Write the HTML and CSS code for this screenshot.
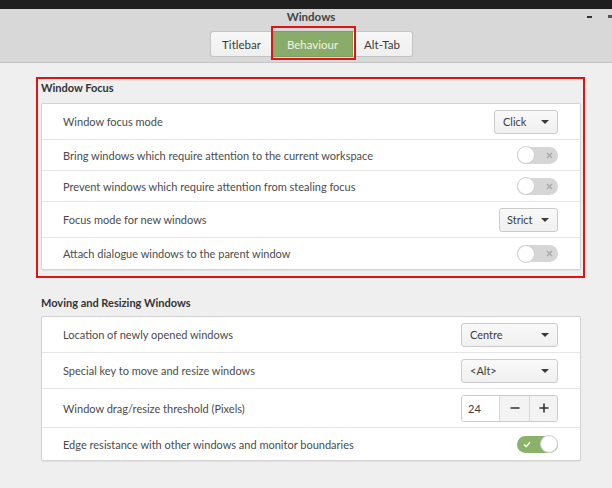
FILE: index.html
```html
<!DOCTYPE html>
<html>
<head>
<meta charset="utf-8">
<title>Windows</title>
<link rel="stylesheet" href="styles.css">
</head>
<body>
<div class="topbar"></div>
<header class="header">
  <div class="title">Windows</div>
  <nav class="tabs">
    <div class="tab first">Titlebar</div>
    <div class="tab active">Behaviour</div>
    <div class="tab last">Alt-Tab</div>
  </nav>
  <div class="wincontrols"><span class="minimize"></span><span class="maximize"></span></div>
</header>
<main class="content">
  <section class="section highlighted">
    <h2 class="heading">Window Focus</h2>
    <div class="card">
      <div class="row tall">
        <span class="label">Window focus mode</span>
        <div class="combo w-click"><span>Click</span><span class="arrow"></span></div>
      </div>
      <div class="row">
        <span class="label">Bring windows which require attention to the current workspace</span>
        <div class="switch off"><span class="knob"></span><svg class="mark" width="7" height="7" viewBox="0 0 7 7"><path d="M1 1L6 6M6 1L1 6" stroke="#a9a9a9" stroke-width="1.4" fill="none"/></svg></div>
      </div>
      <div class="row">
        <span class="label">Prevent windows which require attention from stealing focus</span>
        <div class="switch off"><span class="knob"></span><svg class="mark" width="7" height="7" viewBox="0 0 7 7"><path d="M1 1L6 6M6 1L1 6" stroke="#a9a9a9" stroke-width="1.4" fill="none"/></svg></div>
      </div>
      <div class="row tall">
        <span class="label">Focus mode for new windows</span>
        <div class="combo w-strict"><span>Strict</span><span class="arrow"></span></div>
      </div>
      <div class="row last">
        <span class="label">Attach dialogue windows to the parent window</span>
        <div class="switch off"><span class="knob"></span><svg class="mark" width="7" height="7" viewBox="0 0 7 7"><path d="M1 1L6 6M6 1L1 6" stroke="#a9a9a9" stroke-width="1.4" fill="none"/></svg></div>
      </div>
    </div>
  </section>

  <section class="section plain">
    <h2 class="heading">Moving and Resizing Windows</h2>
    <div class="card">
      <div class="row tall">
        <span class="label">Location of newly opened windows</span>
        <div class="combo w-wide"><span>Centre</span><span class="arrow"></span></div>
      </div>
      <div class="row tall">
        <span class="label">Special key to move and resize windows</span>
        <div class="combo w-wide"><span>&lt;Alt&gt;</span><span class="arrow"></span></div>
      </div>
      <div class="row spinrow">
        <span class="label">Window drag/resize threshold (Pixels)</span>
        <div class="spin">
          <span class="spin-entry">24</span>
          <span class="spin-btn minus"><svg width="10" height="10" viewBox="0 0 10 10"><path d="M0.5 5H9.5" stroke="#333" stroke-width="1.6"/></svg></span>
          <span class="spin-btn plus"><svg width="10" height="10" viewBox="0 0 10 10"><path d="M0.5 5H9.5M5 0.5V9.5" stroke="#333" stroke-width="1.6"/></svg></span>
        </div>
      </div>
      <div class="row last">
        <span class="label">Edge resistance with other windows and monitor boundaries</span>
        <div class="switch on"><svg class="mark" width="8" height="7" viewBox="0 0 8 7"><path d="M1 3.6L3.2 5.6L7 1.2" stroke="#ffffff" stroke-width="1.4" fill="none"/></svg><span class="knob"></span></div>
      </div>
    </div>
  </section>
</main>
</body>
</html>
```
FILE: styles.css
```css
html, body {
  margin: 0;
  padding: 0;
}

body {
  width: 612px;
  height: 488px;
  overflow: hidden;
  background: #efefef;
  font-family: "Lato", "Noto Sans", "DejaVu Sans", sans-serif;
  font-size: 11px;
  color: #4b4b4b;
}

.topbar {
  height: 9px;
  background: #1e1e1e;
}

.header {
  position: relative;
  box-sizing: border-box;
  height: 54px;
  padding-left: 10px;
  background: #d8d8d8;
  border-bottom: 1px solid #c4c4c4;
  display: flex;
  flex-direction: column;
  align-items: center;
}

.title {
  line-height: 16px;
  font-weight: bold;
  color: #444;
  font-size: 11.5px;
}

.tabs {
  margin-top: 6px;
  display: flex;
}

.tab {
  box-sizing: border-box;
  height: 26px;
  display: flex;
  align-items: center;
  justify-content: center;
  background: linear-gradient(#f7f7f7, #efefef);
  border: 1px solid #c3c3c3;
  color: #3a3a3a;
  font-size: 11.5px;
}

.tab.first {
  width: 63px;
  border-radius: 3px 0 0 3px;
  border-right: none;
}

.tab.last {
  width: 60px;
  border-radius: 0 3px 3px 0;
  border-left: none;
}

.tab.active {
  position: relative;
  width: 80px;
  background: #8aac6b;
  border-color: #7e9f60;
  color: #eef4e4;
}

.tab.active::after {
  content: "";
  position: absolute;
  top: -6px;
  bottom: -4px;
  left: -3px;
  right: -4px;
  border: 2px solid #e11414;
}

.wincontrols {
  position: absolute;
  top: 6px;
  right: 0;
  display: flex;
  gap: 16px;
  align-items: center;
}

.minimize {
  width: 5px;
  height: 2px;
  background: #333;
}

.maximize {
  width: 4px;
  height: 3px;
  background: #555;
}

.content {
  padding: 14px 27px 0 36px;
}

.section.highlighted {
  border: 2px solid #e11414;
  padding: 1px 2px 6px 3px;
}

.section.plain {
  margin: 15px 4px 0 5px;
}

.heading {
  margin: 0 0 7px 0;
  line-height: 16px;
  font-size: 11px;
  font-weight: bold;
  color: #333;
}

.section.plain .heading {
  margin-bottom: 5px;
  padding-top: 2px;
}

.card {
  background: #ffffff;
  border: 1px solid #d3d3d3;
  border-radius: 2px;
  box-shadow: 0 1px 1px rgba(0, 0, 0, 0.06);
}

.row {
  box-sizing: border-box;
  height: 31px;
  padding: 0 22px 0 21px;
  display: flex;
  align-items: center;
  justify-content: space-between;
  border-bottom: 1px solid #e6e6e6;
}

.row.tall {
  height: 36px;
}

.row.spinrow {
  height: 39px;
}

.row.last {
  border-bottom: none;
  height: 31px;
}

.section.plain .row.last {
  height: 32px;
}

.combo {
  box-sizing: border-box;
  height: 24px;
  padding: 0 8px 0 8px;
  display: flex;
  align-items: center;
  justify-content: space-between;
  background: linear-gradient(#f9f9f9, #f0f0f0);
  border: 1px solid #cbcbcb;
  border-radius: 3px;
  color: #3c3c3c;
}

.combo.w-click {
  width: 64px;
}

.combo.w-strict {
  width: 59px;
  padding-left: 7px;
}

.combo.w-wide {
  width: 97px;
}

.arrow {
  width: 0;
  height: 0;
  border-left: 4px solid transparent;
  border-right: 4px solid transparent;
  border-top: 4px solid #3a3a3a;
}

.switch {
  box-sizing: border-box;
  width: 41px;
  height: 17px;
  border-radius: 9px;
  display: flex;
  align-items: center;
  justify-content: space-between;
}

.switch.off {
  background: #d6d6d6;
  padding-right: 5px;
}

.switch.on {
  background: #8ab26a;
  padding-left: 6px;
}

.knob {
  box-sizing: border-box;
  width: 18px;
  height: 18px;
  border-radius: 50%;
  background: #ffffff;
  border: 1px solid #cfcfcf;
}

.mark {
  display: block;
}

.spin {
  display: flex;
  height: 27px;
  box-sizing: border-box;
  border: 1px solid #cbcbcb;
  border-radius: 3px;
  overflow: hidden;
}

.spin-entry {
  width: 37px;
  box-sizing: border-box;
  padding-left: 6px;
  display: flex;
  align-items: center;
  background: #ffffff;
  color: #3c3c3c;
}

.spin-btn {
  box-sizing: border-box;
  width: 30px;
  display: flex;
  align-items: center;
  justify-content: center;
  background: #f3f3f3;
  border-left: 1px solid #d8d8d8;
}

.spin-btn.plus {
  width: 28px;
}
```
